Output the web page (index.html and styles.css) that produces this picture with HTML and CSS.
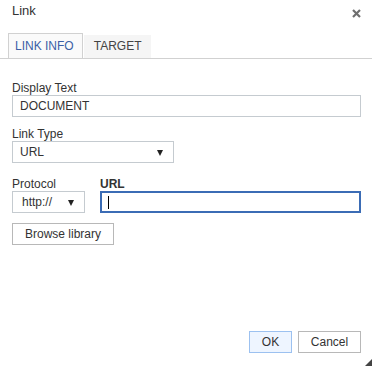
FILE: index.html
```html
<!DOCTYPE html>
<html lang="en">
  <head>
    <meta charset="UTF-8" />
    <title>Link</title>
    <link rel="stylesheet" href="styles.css">
  </head>
  <body>
    <div class="dialog">
      <div class="titlebar">
        <span class="title">Link</span>
        <span class="close">
          <svg width="9" height="9" viewBox="0 0 9 9">
            <path d="M1 1 L8 8 M8 1 L1 8" stroke="#6f6f6f" stroke-width="2.2" />
          </svg>
        </span>
      </div>

      <!-- Tabs -->
      <div class="tabs">
        <span class="tab active">LINK INFO</span>
        <span class="tab">TARGET</span>
      </div>

      <div class="content">
        <div class="field">
          <label>Display Text</label>
          <input class="text-input" type="text" value="DOCUMENT" />
        </div>

        <div class="field">
          <label>Link Type</label>
          <div class="select wide">URL</div>
        </div>

        <div class="row">
          <div class="field">
            <label>Protocol</label>
            <div class="select narrow">http://</div>
          </div>
          <div class="field grow">
            <label class="bold">URL</label>
            <div class="text-input focused"><span class="caret"></span></div>
          </div>
        </div>

        <button class="btn browse">Browse library</button>
      </div>

      <div class="footer">
        <button class="btn ok">OK</button>
        <button class="btn cancel">Cancel</button>
      </div>
      <span class="grip"></span>
    </div>
  </body>
</html>
```

FILE: styles.css
```css
body {
  margin: 0;
  font-family: "Liberation Sans", Arial, sans-serif;
  font-size: 12px;
  color: #333;
  background: #fff;
}
.dialog {
  position: relative;
  width: 372px;
  height: 366px;
  display: flex;
  flex-direction: column;
}
.titlebar {
  height: 33px;
  box-sizing: border-box;
  padding: 3px 11px 0 12px;
  display: flex;
  justify-content: space-between;
}
.title {
  font-size: 13px;
  line-height: 15px;
}
.close {
  margin-top: 6px;
  line-height: 0;
}
.tabs {
  height: 25px;
  display: flex;
  align-items: flex-end;
  gap: 1px;
  padding-left: 8px;
  border-bottom: 1px solid #d1d1d1;
}
.tab {
  height: 23px;
  line-height: 23px;
  padding: 0 10px 0 10px;
  background: #f5f5f5;
  color: #444;
}
.tab.active {
  height: 24px;
  line-height: 24px;
  padding: 0 8px 0 6px;
  background: #fafafa;
  border: 1px solid #d1d1d1;
  border-bottom: none;
  color: #3b5fa6;
}
.content {
  flex: 1;
  padding: 22px 11px 0 12px;
}
.field {
  display: flex;
  flex-direction: column;
  margin-bottom: 10px;
}
label {
  line-height: 14px;
}
.bold {
  font-weight: bold;
}
.text-input {
  height: 22px;
  box-sizing: border-box;
  border: 1px solid #c5cbd0;
  padding: 0 7px;
  font-family: inherit;
  font-size: 12px;
  color: #333;
  outline: none;
  display: flex;
  align-items: center;
}
.text-input.focused {
  border: 2px solid #3b6cb5;
  padding: 0 6px;
}
.caret {
  width: 1px;
  height: 13px;
  background: #000;
}
.select {
  height: 22px;
  box-sizing: border-box;
  border: 1px solid #c5cbd0;
  padding: 0 7px;
  line-height: 20px;
  position: relative;
}
.select::after {
  content: "";
  position: absolute;
  right: 10px;
  top: 8px;
  border-left: 3px solid transparent;
  border-right: 3px solid transparent;
  border-top: 6px solid #222;
}
.select.wide {
  width: 162px;
}
.select.narrow {
  width: 73px;
  padding: 0 9px;
}
.row {
  display: flex;
  gap: 15px;
  margin-top: 14px;
}
.grow {
  flex: 1;
}
.btn {
  height: 22px;
  box-sizing: border-box;
  border: 1px solid #b8b8b8;
  background: #fff;
  font-family: inherit;
  font-size: 12px;
  color: #333;
  padding: 0 12px;
}
.browse {
  width: 102px;
  padding: 0;
}
.footer {
  display: flex;
  justify-content: flex-end;
  gap: 6px;
  padding: 0 11px 13px 0;
}
.ok {
  width: 43px;
  padding: 0;
  background: #eef5ff;
  border-color: #9cc1f0;
}
.cancel {
  width: 63px;
  padding: 0;
}
.grip {
  position: absolute;
  right: 0;
  bottom: 0;
  width: 0;
  height: 0;
  border-left: 7px solid transparent;
  border-bottom: 7px solid #444;
}
```
